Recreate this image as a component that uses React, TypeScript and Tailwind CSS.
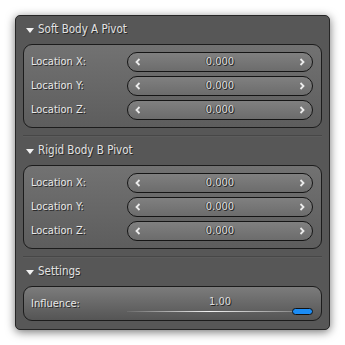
const font = { fontFamily: '"DejaVu Sans Condensed", "DejaVu Sans", sans-serif' };

const Caret = () => (
  <svg width="8" height="5" viewBox="0 0 8 5" className="shrink-0">
    <polygon points="0,0 8,0 4,5" fill="#f2f2f2" />
  </svg>
);

const Header = ({ title }: { title: string }) => (
  <div className="h-[14px] flex items-center gap-[4px] pl-[3px] text-[11.5px] text-[#e2e2e2] [text-shadow:1px_1px_0_#2a2a2a]">
    <Caret />
    <span>{title}</span>
  </div>
);

const Separator = () => (
  <div className="mt-[7px] h-[2px] border-t border-[#474747] border-b border-b-[#5c5c5c]" />
);

const Spin = ({ label }: { label: string }) => (
  <div className="flex items-center h-[20px]">
    <span className="w-[96px] text-[11px] text-[#e8e8e8] [text-shadow:1px_1px_0_#2a2a2a]">{label}</span>
    <div className="flex-1 h-[20px] rounded-full border border-[#151515] bg-gradient-to-b from-[#808080] to-[#6c6c6c] flex items-center justify-between px-[7px]">
      <svg width="6" height="8" viewBox="0 0 6 8">
        <polyline points="4.5,1 1.5,4 4.5,7" fill="none" stroke="#ececec" strokeWidth="1.8" />
      </svg>
      <span className="text-[11px] text-[#dcdcdc] [text-shadow:1px_1px_0_#222,-1px_0_0_#444]">0.000</span>
      <svg width="6" height="8" viewBox="0 0 6 8">
        <polyline points="1.5,1 4.5,4 1.5,7" fill="none" stroke="#ececec" strokeWidth="1.8" />
      </svg>
    </div>
  </div>
);

const PivotBox = () => (
  <div className="mt-[7px] h-[84px] rounded-[9px] border border-[#1c1c1c] bg-gradient-to-b from-[#727272] to-[#5d5d5d] pl-[7px] pr-[8px] pt-[7px] flex flex-col gap-[4px]">
    <Spin label="Location X:" />
    <Spin label="Location Y:" />
    <Spin label="Location Z:" />
  </div>
);

export default function App() {
  return (
    <div className="w-[345px] h-[345px] bg-white p-[15px]" style={font}>
      <div className="w-[315px] h-[315px] rounded-[5px] border border-[#262626] bg-[#575757] shadow-[0_2px_10px_rgba(0,0,0,0.55)] px-[7px] pt-[7px]">
        <Header title="Soft Body A Pivot" />
        <PivotBox />
        <Separator />
        <div className="mt-[7px]">
          <Header title="Rigid Body B Pivot" />
        </div>
        <PivotBox />
        <Separator />
        <div className="mt-[7px]">
          <Header title="Settings" />
        </div>
        <div className="mt-[7px] h-[35px] rounded-[9px] border border-[#1c1c1c] bg-gradient-to-b from-[#7c7c7c] to-[#555555] pl-[7px] pr-[8px] flex items-center">
          <span className="w-[96px] pt-[2px] text-[11px] text-[#e8e8e8] [text-shadow:1px_1px_0_#2a2a2a]">Influence:</span>
          <div className="flex-1 flex flex-col items-stretch pt-[3px]">
            <div className="text-center text-[11px] leading-[12px] text-[#dcdcdc] [text-shadow:1px_1px_0_#222]">1.00</div>
            <div className="flex items-center h-[7px]">
              <div className="flex-1 h-px bg-gradient-to-r from-[#6a6a6a] via-[#f4f4f4] to-[#8a8a8a]" />
              <div className="w-[21px] h-[7px] rounded-full border border-[#111] bg-[#1b8cf5]" />
            </div>
          </div>
        </div>
      </div>
    </div>
  );
}
